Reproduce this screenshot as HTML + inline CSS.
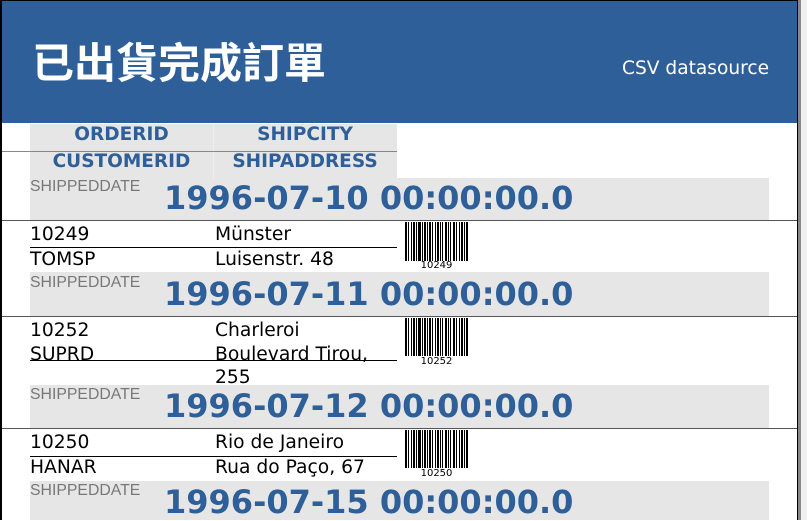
<!DOCTYPE html>
<html><head><meta charset="utf-8"><style>
*{margin:0;padding:0;box-sizing:border-box}
body{width:807px;height:520px;overflow:hidden;background:#fff;position:relative;font-family:"DejaVu Sans","Liberation Sans",sans-serif}
.a{position:absolute;white-space:nowrap}
.hdr{left:2px;top:1px;width:795px;height:122px;background:#2e5f99}
.title{left:32px;top:30px;color:#fff;font-size:42px;font-family:"Liberation Sans","WenQuanYi Zen Hei","Noto Sans CJK TC",sans-serif;font-weight:bold}
.csv{left:622px;top:58px;color:#fff;font-size:18.6px}
.g{background:#e6e6e6}
.h{color:#2e5f99;font-weight:bold;font-size:18.5px;text-align:center;line-height:27px}
.line{height:1px;background:#555}
.sd{color:#777;font-size:15.8px;font-family:"Liberation Sans","DejaVu Sans",sans-serif;left:30px}
.dt{color:#2e5f99;font-weight:bold;font-size:32px;left:164px;margin-top:2px}
.t{font-size:18.7px;color:#000;margin-top:2px}
.bc{font-size:10px;font-family:"DejaVu Sans",monospace;color:#000;width:63px;text-align:center;left:405px}
</style></head><body>
<div class="a" style="left:0;top:0;width:2px;height:520px;background:#000"></div>
<div class="a" style="left:0;top:0;width:798px;height:1px;background:#000"></div>
<div class="a" style="left:797px;top:0;width:1px;height:520px;background:#000"></div>
<div class="a" style="left:798px;top:0;width:9px;height:520px;background:#f0f0f0"></div>
<div class="a" style="left:798px;top:0;width:3px;height:520px;background:#888"></div>
<div class="a hdr"></div>
<div class="a title">已出貨完成訂單</div>
<div class="a csv">CSV datasource</div>

<div class="a g" style="left:30px;top:124px;width:367px;height:54px"></div>
<div class="a" style="left:213px;top:124px;width:1px;height:54px;background:#eee"></div>
<div class="a h" style="left:30px;top:121px;width:183px">ORDERID</div>
<div class="a h" style="left:213px;top:121px;width:184px">SHIPCITY</div>
<div class="a line" style="left:2px;top:151px;width:395px;background:#888"></div>
<div class="a h" style="left:30px;top:148px;width:183px">CUSTOMERID</div>
<div class="a h" style="left:213px;top:148px;width:184px">SHIPADDRESS</div>

<div class="a g" style="left:30px;top:178px;width:739px;height:42px"></div>
<div class="a sd" style="top:178px">SHIPPEDDATE</div>
<div class="a dt" style="top:177px">1996-07-10 00:00:00.0</div>
<div class="a line" style="left:2px;top:220px;width:795px"></div>

<div class="a t" style="left:30px;top:222px">10249</div>
<div class="a t" style="left:215px;top:222px">Münster</div>
<div class="a line" style="left:30px;top:247px;width:367px;background:#000"></div>
<div class="a t" style="left:30px;top:247px">TOMSP</div>
<div class="a t" style="left:215px;top:247px">Luisenstr. 48</div>
<svg class="a" style="left:405px;top:222px" width="63" height="39"><g fill="#000" id="b1"><rect x="0" width="2" height="39"/><rect x="3" width="1" height="39"/><rect x="6" width="1" height="39"/><rect x="8" width="2" height="39"/><rect x="11" width="1" height="39"/><rect x="13" width="3" height="39"/><rect x="17" width="1" height="39"/><rect x="19" width="2" height="39"/><rect x="22" width="1" height="39"/><rect x="24" width="2" height="39"/><rect x="27" width="1" height="39"/><rect x="30" width="1" height="39"/><rect x="32" width="2" height="39"/><rect x="35" width="1" height="39"/><rect x="37" width="1" height="39"/><rect x="40" width="2" height="39"/><rect x="43" width="1" height="39"/><rect x="45" width="1" height="39"/><rect x="48" width="2" height="39"/><rect x="51" width="1" height="39"/><rect x="54" width="1" height="39"/><rect x="56" width="2" height="39"/><rect x="59" width="1" height="39"/><rect x="61" width="2" height="39"/></g></svg>
<div class="a bc" style="top:260px">10249</div>

<div class="a g" style="left:30px;top:272px;width:739px;height:44px"></div>
<div class="a sd" style="top:274px">SHIPPEDDATE</div>
<div class="a dt" style="top:273px">1996-07-11 00:00:00.0</div>
<div class="a line" style="left:2px;top:316px;width:795px"></div>

<div class="a t" style="left:30px;top:318px">10252</div>
<div class="a t" style="left:215px;top:318px">Charleroi</div>
<div class="a t" style="left:30px;top:342px">SUPRD</div>
<div class="a t" style="left:215px;top:342px">Boulevard Tirou,</div>
<div class="a line" style="left:30px;top:360px;width:367px;background:#000"></div>
<div class="a t" style="left:215px;top:365px">255</div>
<svg class="a" style="left:405px;top:318px" width="63" height="38"><use href="#b1"/></svg>
<div class="a bc" style="top:356px">10252</div>

<div class="a g" style="left:30px;top:385px;width:739px;height:43px"></div>
<div class="a sd" style="top:386px">SHIPPEDDATE</div>
<div class="a dt" style="top:385px">1996-07-12 00:00:00.0</div>
<div class="a line" style="left:2px;top:428px;width:795px"></div>

<div class="a t" style="left:30px;top:430px">10250</div>
<div class="a t" style="left:215px;top:430px">Rio de Janeiro</div>
<div class="a line" style="left:30px;top:456px;width:367px;background:#000"></div>
<div class="a t" style="left:30px;top:455px">HANAR</div>
<div class="a t" style="left:215px;top:455px">Rua do Paço, 67</div>
<svg class="a" style="left:405px;top:430px" width="63" height="38"><use href="#b1"/></svg>
<div class="a bc" style="top:468px">10250</div>

<div class="a g" style="left:30px;top:481px;width:739px;height:39px"></div>
<div class="a sd" style="top:482px">SHIPPEDDATE</div>
<div class="a dt" style="top:481px">1996-07-15 00:00:00.0</div>
</body></html>
